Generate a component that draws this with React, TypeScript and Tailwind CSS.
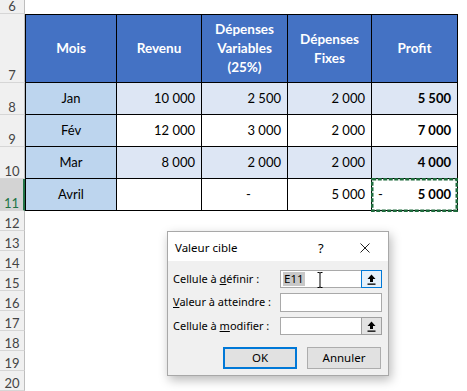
import React from "react";

const cellFont = { fontFamily: "Lato, 'Liberation Sans', sans-serif" };
const uiFont = { fontFamily: "'Segoe UI', 'Noto Sans', 'Liberation Sans', sans-serif" };

type Row = { n: number; month: string; rev: string; varx: string; fix: string; profit: string; shade: boolean };

const rows: Row[] = [
  { n: 8, month: "Jan", rev: "10 000", varx: "2 500", fix: "2 000", profit: "5 500", shade: true },
  { n: 9, month: "Fév", rev: "12 000", varx: "3 000", fix: "2 000", profit: "7 000", shade: false },
  { n: 10, month: "Mar", rev: "8 000", varx: "2 000", fix: "2 000", profit: "4 000", shade: true },
];

function RowHead({ n, h, active }: { n: number; h: string; active?: boolean }) {
  return (
    <div
      className={`${h} w-[25px] shrink-0 flex items-end justify-center text-[13px] leading-[14px] border-b border-[#d6d6d6] ${
        active
          ? "bg-[#d3d3d3] text-[#217346] border-r-2 border-r-[#217346]"
          : "bg-[#f0f0f0] text-[#444] border-r border-r-[#bdbdbd]"
      }`}
      style={cellFont}
    >
      {n}
    </div>
  );
}

function UpArrow() {
  return (
    <svg width="9" height="11" viewBox="0 0 9 11">
      <path d="M4.5 0.5 L8.5 5 H6 V8 H3 V5 H0.5 Z" fill="#000" />
      <rect x="0.5" y="9.5" width="8" height="1.3" fill="#000" />
    </svg>
  );
}

function Dialog() {
  return (
    <div
      className="absolute left-[167px] top-[231px] w-[222px] h-[145px] border border-[#a8a8a8] bg-[#f0f0f0] shadow-[2px_4px_10px_rgba(0,0,0,0.28)] text-[11px] text-black"
      style={uiFont}
    >
      <div className="h-[29px] bg-white flex items-center pl-[7px] pt-[2px] relative text-[11.5px]">
        <span>Valeur cible</span>
        <span className="absolute left-[150px] top-[7px] text-[13px]">?</span>
        <svg className="absolute left-[192px] top-[11px]" width="10" height="10" viewBox="0 0 10 10">
          <path d="M0.5 0.5 L9.5 9.5 M9.5 0.5 L0.5 9.5" stroke="#222" strokeWidth="1" />
        </svg>
      </div>
      <div className="pl-[5px] pt-[9px] grid grid-cols-[107px_102px] gap-y-[5px]">
        <div className="h-[18px] leading-[18px] whitespace-nowrap">
          Cellule à <span className="underline">d</span>éfinir :
        </div>
        <div className="h-[18px] bg-white border border-[#a9a9a9] flex items-center relative text-[11.5px]">
          <span className="ml-[2px] bg-[#c8c8c8] px-[1px] leading-[14px]">E11</span>
          <svg className="absolute left-[36px] top-[1px]" width="6" height="16" viewBox="0 0 6 16">
            <path d="M0.5 0.5 H2.5 Q3 0.5 3 1.5 V14.5 Q3 15.5 2.5 15.5 H0.5 M5.5 0.5 H3.5 Q3 0.5 3 1.5 M5.5 15.5 H3.5 Q3 15.5 3 14.5" stroke="#000" strokeWidth="1" fill="none" />
          </svg>
          <div className="ml-auto w-[21px] h-[18px] -mr-px border border-[#0078d7] bg-[#e5f1fb] flex items-center justify-center">
            <UpArrow />
          </div>
        </div>
        <div className="h-[18px] leading-[18px] whitespace-nowrap">
          <span className="underline">V</span>aleur à atteindre :
        </div>
        <div className="h-[19px] bg-white border border-[#a9a9a9]" />
        <div className="h-[18px] leading-[18px] whitespace-nowrap">
          Cellule à <span className="underline">m</span>odifier :
        </div>
        <div className="h-[18px] bg-white border border-[#a9a9a9] flex items-center">
          <div className="ml-auto w-[21px] h-[18px] -mr-px border border-[#a0a0a0] bg-[#e3e3e3] flex items-center justify-center">
            <UpArrow />
          </div>
        </div>
      </div>
      <div className="flex gap-[10px] pl-[55px] mt-[12px] text-[11.5px]">
        <button className="w-[74px] h-[22px] bg-[#e1e1e1] border-2 border-[#0078d7] flex items-center justify-center">
          OK
        </button>
        <button className="w-[74px] h-[22px] bg-[#e1e1e1] border border-[#adadad] flex items-center justify-center">
          Annuler
        </button>
      </div>
    </div>
  );
}

export default function App() {
  const numCell = "flex items-center justify-end pr-[6px] border-r border-b border-black";
  return (
    <div className="relative w-[467px] h-[391px] bg-white overflow-hidden text-black" style={cellFont}>
      {/* row 6 */}
      <div className="flex">
        <RowHead n={6} h="h-[14px]" />
      </div>

      {/* header row 7 */}
      <div className="flex h-[69px]">
        <RowHead n={7} h="h-[69px]" />
        <div className="flex h-[69px] border-t border-black bg-[#4472c4] text-white font-bold text-[13.5px] leading-[19px] text-center">
          <div className="w-[92px] border-l border-r border-b border-black flex items-center justify-center">Mois</div>
          <div className="w-[85px] border-r border-b border-black flex items-center justify-center">Revenu</div>
          <div className="w-[86px] border-r border-b border-black flex items-center justify-center">
            Dépenses
            <br />
            Variables
            <br />
            (25%)
          </div>
          <div className="w-[84px] border-r border-b border-black flex items-center justify-center">
            Dépenses
            <br />
            Fixes
          </div>
          <div className="w-[86px] border-r border-b border-black flex items-center justify-center">Profit</div>
        </div>
      </div>

      {rows.map((r) => (
        <div key={r.n} className="flex h-[32px] text-[13px]">
          <RowHead n={r.n} h="h-[32px]" />
          <div className={`flex ${r.shade ? "bg-[#dde6f4]" : "bg-white"}`}>
            <div className="w-[92px] bg-[#bdd5ee] border-l border-r border-b border-black flex items-center justify-center">
              {r.month}
            </div>
            <div className={`w-[85px] ${numCell}`}>{r.rev}</div>
            <div className={`w-[86px] ${numCell}`}>{r.varx}</div>
            <div className={`w-[84px] ${numCell}`}>{r.fix}</div>
            <div className={`w-[86px] ${numCell} font-bold`}>{r.profit}</div>
          </div>
        </div>
      ))}

      {/* row 11 */}
      <div className="flex h-[32px] text-[13px]">
        <RowHead n={11} h="h-[32px]" active />
        <div className="flex bg-white">
          <div className="w-[92px] bg-[#bdd5ee] border-l border-r border-b border-black flex items-center justify-center">
            Avril
          </div>
          <div className={`w-[85px] ${numCell}`} />
          <div className="w-[86px] border-r border-b border-black flex items-center justify-center pl-[8px]">-</div>
          <div className={`w-[84px] ${numCell}`}>5 000</div>
          <div className="w-[86px] border-r border-b border-black relative flex items-center font-bold">
            <svg className="absolute -left-px -top-px" width="87" height="34" viewBox="0 0 87 34">
              <rect x="1.25" y="1.25" width="84.5" height="31.5" fill="none" stroke="#1e6b3c" strokeWidth="2.5" strokeDasharray="4 1.5" />
            </svg>
            <span className="pl-[6px] font-normal">-</span>
            <span className="ml-auto pr-[6px]">5 000</span>
          </div>
        </div>
      </div>

      {[12, 13, 14, 15, 16, 17, 18, 19, 20].map((n) => (
        <div key={n} className="flex h-[20px]">
          <RowHead n={n} h="h-[20px]" />
        </div>
      ))}

      <Dialog />
    </div>
  );
}
